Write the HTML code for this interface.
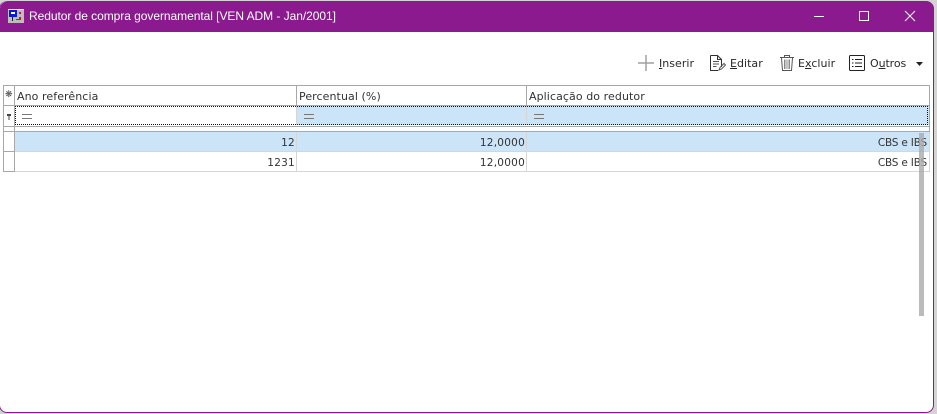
<!DOCTYPE html>
<html lang="pt-BR"><head><meta charset="utf-8"><title>Redutor</title>
<style>
html,body{margin:0;padding:0;background:#d4d4d4;}
body{width:937px;height:414px;position:relative;overflow:hidden;font-family:"DejaVu Sans","Liberation Sans",sans-serif;}
.a{position:absolute;}
.t{position:absolute;white-space:nowrap;font-size:11px;letter-spacing:.08px;line-height:14px;color:#333;}
.r{text-align:right;}
.n{font-size:10.5px;letter-spacing:.25px;}
.c{font-size:10.5px;letter-spacing:-.2px;}
.tb{position:absolute;white-space:nowrap;font-size:11px;letter-spacing:.03px;line-height:14px;color:#282828;top:57px;}
u{text-decoration:underline;}
.h{background:#a8a8a8;position:absolute;}
.l{background:#d6d6d6;position:absolute;}
.dx{position:absolute;height:1px;background:repeating-linear-gradient(90deg,#111 0 1px,transparent 1px 2px);}
.dy{position:absolute;width:1px;background:repeating-linear-gradient(180deg,#111 0 1px,transparent 1px 2px);}
</style></head><body>
<div class="a" style="left:-1px;top:1px;width:935px;height:412px;background:#fff;box-sizing:border-box;border:1px solid #8a1a8e;border-top:0;border-radius:8px;"></div>
<div class="a" style="left:0;top:1px;width:934px;height:31px;background:#8a1a8e;border-radius:8px 8px 0 0;"></div>

<svg class="a" style="left:8px;top:9px" width="16" height="14" viewBox="0 0 16 14">
<rect width="16" height="14" fill="#bdbdbd"/><rect x="0" y="0" width="16" height="1" fill="#eee"/>
<rect x="1" y="1" width="8" height="7" fill="#0a1ad0"/><rect x="3" y="3" width="4" height="2" fill="#fff"/>
<rect x="4" y="8" width="1" height="4" fill="#222"/><rect x="11" y="3" width="2" height="2" fill="#d01818"/>
<rect x="11" y="8" width="2" height="3" fill="#d01818"/><rect x="8" y="10" width="3" height="1" fill="#d01818"/>
</svg>
<div class="a" style="left:29px;top:9px;color:#fff;font:12px/15px 'Liberation Sans',sans-serif;white-space:nowrap;letter-spacing:-.05px;">Redutor de compra governamental [VEN ADM - Jan/2001]</div>
<svg class="a" style="left:810px;top:5px" width="115" height="22" viewBox="0 0 115 22" fill="none" stroke="#fff" stroke-width="1">
<path d="M4 11.500H14"/><rect x="49.500" y="6.500" width="9" height="9"/><path d="M95 6L105 16M105 6L95 16"/>
</svg>

<!-- toolbar -->
<svg class="a" style="left:637px;top:53px" width="20" height="20" viewBox="0 0 20 20"><path d="M1 10H17M9 2V18" stroke="#a0a0a0" stroke-width="1.500" fill="none"/></svg>
<div class="tb" style="left:659px"><u>I</u>nserir</div>
<svg class="a" style="left:709px;top:54px" width="18" height="18" viewBox="0 0 18 18" fill="none" stroke="#303030" stroke-width="1"><path d="M1.500 1.500H8.500L12.500 5.500V13M8.500 1.500V5.500H12.500M1.500 1.500V16.500H9"/><path d="M4 7.500H10M4 10H10M4 12.500H7.500" stroke="#555"/><path d="M10 16L11 13.500L15 9.500L16.500 11L12.500 15Z" stroke="#555"/></svg>
<div class="tb" style="left:730px"><u>E</u>ditar</div>
<svg class="a" style="left:779px;top:54px" width="16" height="18" viewBox="0 0 16 18" fill="none" stroke="#555" stroke-width="1"><path d="M1 3.500H15M5.500 3V1.500H10.500V3"/><path d="M2.500 4L3.500 16.500H12.500L13.500 4"/><path d="M5.500 5.500V15M7 5.500V15M9 5.500V15M10.500 5.500V15" stroke="#888"/></svg>
<div class="tb" style="left:798px">E<u>x</u>cluir</div>
<svg class="a" style="left:849px;top:55px" width="16" height="16" viewBox="0 0 16 16" fill="none" stroke="#222" stroke-width="1"><rect x=".5" y=".5" width="15" height="15" rx="1"/><path d="M6 4.500H13M6 8H13M6 11.500H13"/><path d="M3 4.500H4.500M3 8H4.500M3 11.500H4.500"/></svg>
<div class="tb" style="left:870px;letter-spacing:-.1px">O<u>u</u>tros</div>
<svg class="a" style="left:915px;top:61px" width="9" height="6" viewBox="0 0 9 6"><path d="M1 1H8L4.500 5Z" fill="#222"/></svg>

<!-- grid outlines -->
<div class="h" style="left:3px;top:85px;width:927px;height:1px"></div>
<div class="h" style="left:3px;top:85px;width:1px;height:87px"></div>
<div class="h" style="left:14px;top:85px;width:1px;height:87px"></div>
<div class="h" style="left:296px;top:85px;width:1px;height:20px"></div>
<div class="h" style="left:526px;top:85px;width:1px;height:20px"></div>
<div class="h" style="left:929px;top:85px;width:1px;height:47px"></div>
<div class="h" style="left:3px;top:105px;width:927px;height:1px"></div>
<!-- filter row -->
<div class="a" style="left:296px;top:106px;width:633px;height:19px;background:#cce4f7"></div>
<div class="l" style="left:296px;top:106px;width:1px;height:19px"></div>
<div class="l" style="left:526px;top:106px;width:1px;height:19px"></div>
<div class="dx" style="left:15px;top:106px;width:913px"></div>
<div class="dx" style="left:15px;top:124px;width:913px"></div>
<div class="dy" style="left:15px;top:106px;height:19px"></div>
<div class="dy" style="left:927px;top:106px;height:19px"></div>
<div class="h" style="left:3px;top:126px;width:927px;height:1px"></div>
<div class="h" style="left:3px;top:131px;width:927px;height:1px"></div>
<!-- data rows -->
<div class="a" style="left:15px;top:132px;width:914px;height:19px;background:#cce4f7"></div>
<div class="l" style="left:15px;top:151px;width:915px;height:1px"></div>
<div class="l" style="left:3px;top:171px;width:927px;height:1px"></div>
<div class="h" style="left:3px;top:151px;width:12px;height:1px"></div>
<div class="h" style="left:3px;top:171px;width:12px;height:1px"></div>
<div class="l" style="left:296px;top:132px;width:1px;height:40px"></div>
<div class="l" style="left:526px;top:132px;width:1px;height:40px"></div>
<div class="l" style="left:929px;top:132px;width:1px;height:40px"></div>

<div class="t" style="left:5px;top:89px;font-size:9px;line-height:12px;color:#444">❋</div>
<svg class="a" style="left:6px;top:113px" width="6" height="8" viewBox="0 0 6 8"><path d="M1 1H5V3H3.500V7H2.500V3H1Z" fill="#444"/></svg>
<div class="t" style="left:17px;top:90px">Ano referência</div>
<div class="t" style="left:299px;top:90px">Percentual (%)</div>
<div class="t" style="left:529px;top:90px">Aplicação do redutor</div>
<div class="a" style="left:22px;top:114px;width:10px;height:3px;border-top:1px solid #777;border-bottom:1px solid #777"></div>
<div class="a" style="left:304px;top:114px;width:10px;height:3px;border-top:1px solid #777;border-bottom:1px solid #777"></div>
<div class="a" style="left:534px;top:114px;width:10px;height:3px;border-top:1px solid #777;border-bottom:1px solid #777"></div>

<div class="t r n" style="left:15px;width:280px;top:136px">12</div>
<div class="t r n" style="left:297px;width:228px;top:136px">12,0000</div>
<div class="t r c" style="left:527px;width:400px;top:136px">CBS e IBS</div>
<div class="t r n" style="left:15px;width:280px;top:156px">1231</div>
<div class="t r n" style="left:297px;width:228px;top:156px">12,0000</div>
<div class="t r c" style="left:527px;width:400px;top:156px">CBS e IBS</div>

<div class="a" style="left:919px;top:133px;width:5px;height:183px;background:rgba(170,170,170,.8)"></div>
</body></html>
